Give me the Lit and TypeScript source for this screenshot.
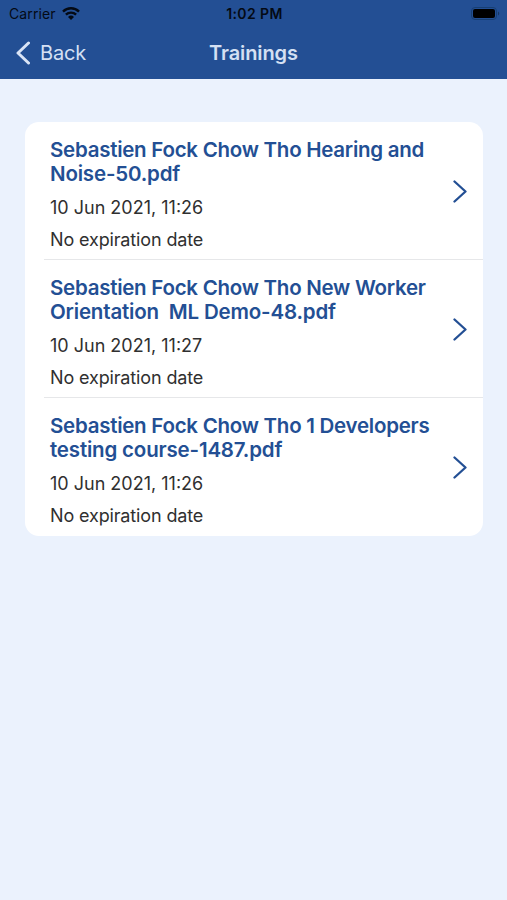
import { LitElement, html, css } from "lit";
import { customElement, property } from "lit/decorators.js";

interface Training {
  title: string[];
  date: string;
  expiry: string;
}

const trainings: Training[] = [
  {
    title: ["Sebastien Fock Chow Tho Hearing and", "Noise-50.pdf"],
    date: "10 Jun 2021, 11:26",
    expiry: "No expiration date",
  },
  {
    title: ["Sebastien Fock Chow Tho New Worker", "Orientation  ML Demo-48.pdf"],
    date: "10 Jun 2021, 11:27",
    expiry: "No expiration date",
  },
  {
    title: ["Sebastien Fock Chow Tho 1 Developers", "testing course-1487.pdf"],
    date: "10 Jun 2021, 11:26",
    expiry: "No expiration date",
  },
];

@customElement("status-bar")
class StatusBar extends LitElement {
  static styles = css`
    :host {
      display: grid;
      grid-template-columns: 1fr auto 1fr;
      align-items: center;
      height: 27px;
      padding: 0 7px 0 9px;
      color: #040a14;
      font-size: 14px;
      line-height: 28px;
    }
    .carrier {
      display: flex;
      align-items: center;
      gap: 6px;
      height: 28px;
      align-self: start;
      letter-spacing: 0.1px;
    }
    .time {
      font-weight: 600;
      font-size: 14px;
      letter-spacing: 0.4px;
    }
    .battery {
      justify-self: end;
    }
    svg {
      display: block;
    }
  `;
  render() {
    return html`
      <div class="carrier">
        <span>Carrier</span>
        <svg width="18" height="14" viewBox="0 0 18 14">
          <g fill="none" stroke="#040a14" stroke-width="2.4">
            <path d="M1 4.6A11.4 11.4 0 0 1 17 4.6" />
            <path d="M3.9 7.7A7.3 7.3 0 0 1 14.1 7.7" />
          </g>
          <path d="M6 9.9A4.3 4.3 0 0 1 12 9.9L9 13Z" fill="#040a14" />
        </svg>
      </div>
      <div class="time">1:02 PM</div>
      <svg class="battery" width="30" height="14" viewBox="0 0 30 14">
        <rect x="1.5" y="0.5" width="25" height="12" rx="3.5" fill="none" stroke="#173f73" stroke-width="1" />
        <rect x="3" y="2" width="22" height="9" rx="2" fill="#000" />
        <path d="M28 4.5A2.3 2.3 0 0 1 28 8.5Z" fill="#173763" />
      </svg>
    `;
  }
}

@customElement("nav-bar")
class NavBar extends LitElement {
  static styles = css`
    :host {
      display: grid;
      grid-template-columns: 1fr auto 1fr;
      align-items: center;
      height: 52px;
      padding: 0 15px;
      box-sizing: border-box;
      color: #d5e0f3;
      font-size: 20px;
      line-height: 51px;
    }
    .back {
      display: flex;
      align-items: center;
      gap: 10px;
      letter-spacing: -0.2px;
    }
    .heading {
      font-weight: 600;
      letter-spacing: -0.1px;
    }
    svg {
      display: block;
    }
  `;
  render() {
    return html`
      <div class="back">
        <svg width="15" height="24" viewBox="0 0 15 24">
          <path d="M13.5 2L3 12L13.5 22" fill="none" stroke="#d9e4f6" stroke-width="3" stroke-linecap="round" stroke-linejoin="round" />
        </svg>
        <span>Back</span>
      </div>
      <div class="heading">Trainings</div>
    `;
  }
}

@customElement("training-row")
class TrainingRow extends LitElement {
  @property({ attribute: false }) item!: Training;

  static styles = css`
    :host {
      display: flex;
      align-items: center;
      justify-content: space-between;
      box-sizing: border-box;
      height: 138px;
      margin-left: 19px;
      padding: 0 15px 0 6px;
    }
    .text {
      display: flex;
      flex-direction: column;
      white-space: pre;
      padding-top: 12px;
    }
    .title {
      color: #234f94;
      font-size: 20.5px;
      font-weight: 570;
      letter-spacing: -0.26px;
      line-height: 24px;
      margin-bottom: 6px;
    }
    .detail {
      color: #303030;
      font-size: 18px;
      line-height: 32px;
    }
    .expiry {
      letter-spacing: -0.14px;
    }
    .line {
      display: block;
    }
    .line:last-child {
      letter-spacing: -0.18px;
    }
    svg {
      display: block;
    }
  `;
  render() {
    return html`
      <div class="text">
        <div class="title">${this.item.title.map((t) => html`<span class="line">${t}</span>`)}</div>
        <div class="detail">${this.item.date}</div>
        <div class="detail expiry">${this.item.expiry}</div>
      </div>
      <svg width="16" height="24" viewBox="0 0 16 24">
        <path d="M2.5 2.5L13.5 12.5L2.5 22.5" fill="none" stroke="#234f94" stroke-width="2.3" stroke-linecap="round" stroke-linejoin="round" />
      </svg>
    `;
  }
}

@customElement("app-root")
class AppRoot extends LitElement {
  static styles = css`
    :host {
      display: block;
      height: 900px;
      background: #ebf2fd;
      font-family: Inter, "Liberation Sans", sans-serif;
    }
    .top {
      background: #234f94;
    }
    .card {
      margin: 43px 24px 0 25px;
      background: #fff;
      border-radius: 14px;
      overflow: hidden;
    }
    .row:not(:last-child) {
      background: linear-gradient(#e6e7e9, #e6e7e9) bottom / 100% 1px no-repeat;
    }
  `;
  render() {
    return html`
      <div class="top">
        <status-bar></status-bar>
        <nav-bar></nav-bar>
      </div>
      <div class="card">
        ${trainings.map((t) => html`<training-row class="row" .item=${t}></training-row>`)}
      </div>
    `;
  }
}
